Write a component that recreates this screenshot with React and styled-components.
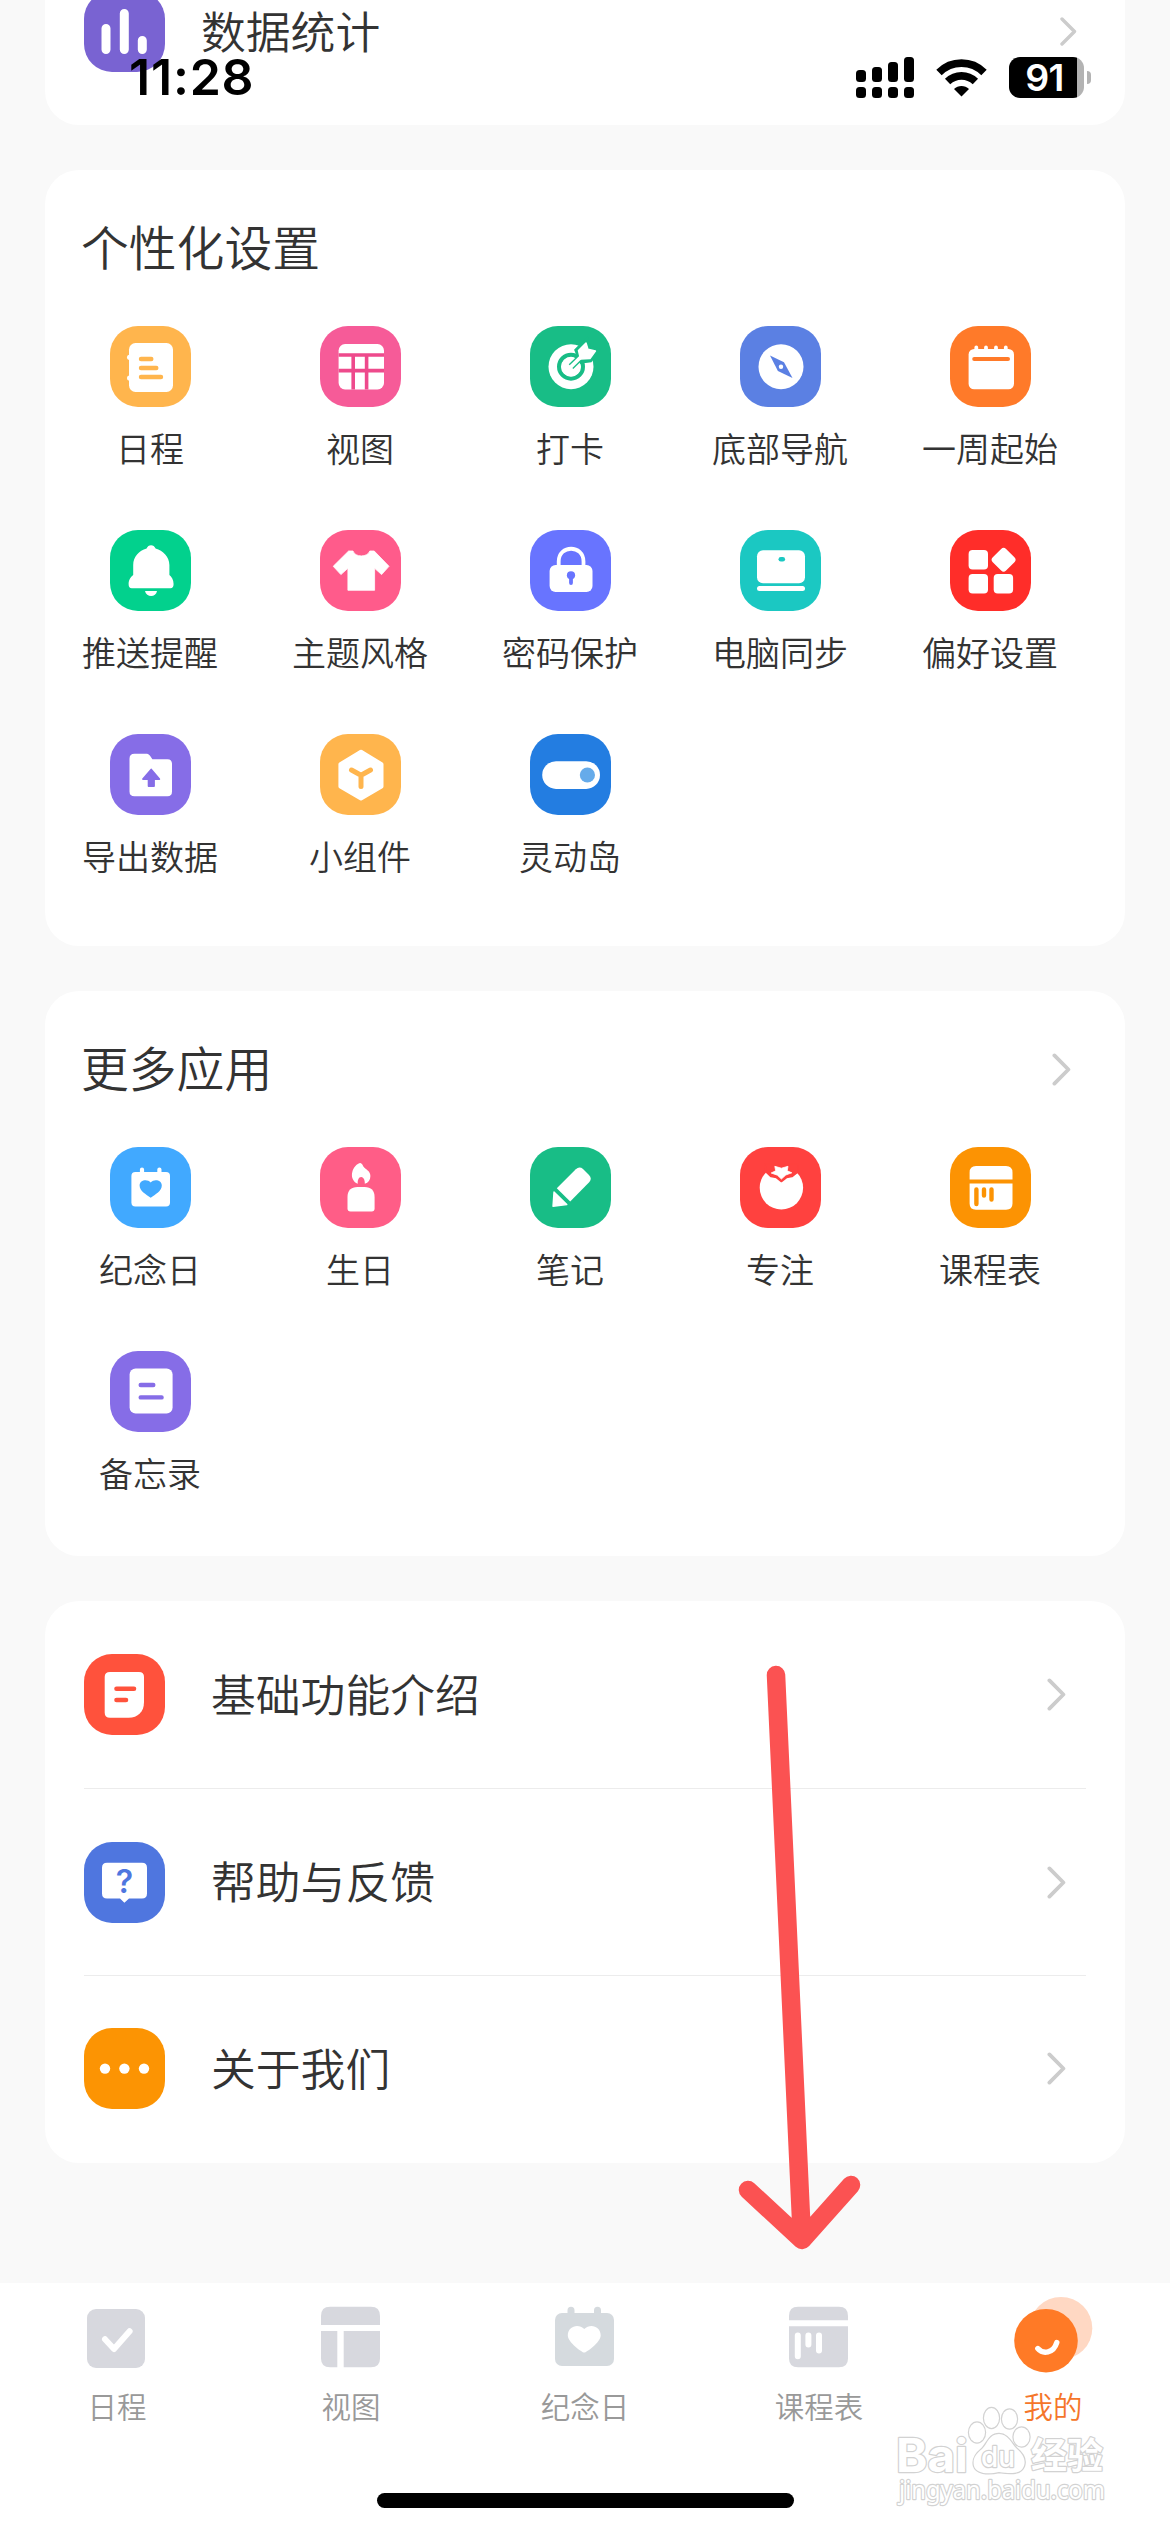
import styled, { createGlobalStyle } from "styled-components";

const GlobalStyle = createGlobalStyle`
  * {
    box-sizing: border-box;
  }
  body {
    margin: 0;
    background: #f9f9f9;
    font-family: "Noto Sans CJK SC", sans-serif;
    font-weight: 350;
    color: #333;
  }
`;

const Screen = styled.div`
  position: relative;
  display: flex;
  flex-direction: column;
  width: 1170px;
  height: 2532px;
  overflow: hidden;
  background: #f9f9f9;
`;

const StatusBar = styled.header`
  position: absolute;
  top: 57px;
  left: 0;
  width: 100%;
  height: 41px;
  padding: 0 79px 0 129px;
  display: flex;
  align-items: center;
  color: #000;
  font-family: Inter, sans-serif;
`;

const Time = styled.span`
  flex: 1;
  font-size: 50px;
  font-weight: 600;
  line-height: 41px;
  letter-spacing: 0.8px;
`;

const StatusIcons = styled.div`
  display: flex;
  align-items: center;
`;

const Wifi = styled.svg`
  margin: 0 22px;
`;

const Battery = styled.div`
  width: 75px;
  height: 41px;
  border-radius: 11px;
  display: flex;
  align-items: center;
  justify-content: center;
  padding-right: 4px;
  background: linear-gradient(to right, #000 68px, #b3b3b3 68px);
  color: #fff;
  font-size: 37.5px;
  font-weight: 600;
  letter-spacing: -0.6px;
`;

const BatteryTip = styled.div`
  width: 4px;
  height: 13px;
  margin-left: 3px;
  border-radius: 0 4px 4px 0;
  background: #b3b3b3;
`;

const Content = styled.main`
  flex: 1;
  display: flex;
  flex-direction: column;
  gap: 45px;
  padding: 0 45px;
  margin-top: -62px;
`;

const Card = styled.section`
  background: #fff;
  border-radius: 34px;
  padding-bottom: ${(props) => props.$bottom || 0}px;
`;

const CardHeader = styled.div`
  display: flex;
  align-items: center;
  justify-content: space-between;
  height: 156px;
  padding: 0 54px 0 36px;
`;

const CardTitle = styled.h2`
  margin: 0;
  padding-bottom: 4px;
  font-size: 47.8px;
  font-weight: 350;
  line-height: 60px;
`;

const AppGrid = styled.div`
  display: grid;
  grid-template-columns: repeat(5, 210px);
  grid-auto-rows: 204px;
`;

const AppItem = styled.div`
  display: flex;
  flex-direction: column;
  align-items: center;
`;

const AppLabel = styled.span`
  margin-top: 21px;
  font-size: 34px;
  line-height: 40px;
  white-space: nowrap;
`;

const Tile = styled.svg`
  width: 81px;
  height: 81px;
  flex: none;
  border-radius: 28px;
  background: ${(props) => props.$color};
  color: ${(props) => props.$color};
`;

const ListRow = styled.div`
  display: flex;
  align-items: center;
  height: 187px;
  margin: 0 39px;
  padding-right: ${(props) => props.$inset}px;
  gap: ${(props) => props.$gap}px;
  & + & {
    border-top: 1px solid #ececec;
  }
  &:last-child:not(:first-child) {
    height: 188px;
    padding-bottom: 2px;
  }
`;

const RowLabel = styled.span`
  flex: 1;
  padding-bottom: 4px;
  font-size: 44.8px;
  line-height: 60px;
`;

const Arrow = styled.svg`
  fill: none;
  stroke: #ccc;
  stroke-linecap: round;
  stroke-linejoin: round;
`;

const TabBar = styled.nav`
  display: grid;
  grid-template-columns: repeat(5, 1fr);
  height: 249px;
  padding-top: 14px;
  background: #fff;
`;

const Tab = styled.div`
  display: flex;
  flex-direction: column;
  align-items: center;
  color: ${(props) => (props.$active ? "#f5762a" : "#999")};
  font-size: 29.5px;
  line-height: 40px;
`;

const TabIcon = styled.svg`
  width: 80px;
  height: 80px;
  margin-bottom: 8px;
  overflow: visible;
`;

const HomeIndicator = styled.div`
  position: absolute;
  left: 377px;
  bottom: 24px;
  width: 417px;
  height: 15px;
  border-radius: 8px;
  background: #000;
`;

const Pointer = styled.svg`
  position: absolute;
  left: 736px;
  top: 1660px;
`;

const Watermark = styled.svg`
  position: absolute;
  left: 890px;
  top: 2400px;
`;

const bar = {
  fill: "none",
  stroke: "currentColor",
  strokeLinecap: "round",
  strokeLinejoin: "round",
};

const glyphs = {
  stats: (
    <path d="M22 37.5V58.5M40.3 22.5V58.5M58.3 49.5V58.5" {...bar} stroke="#fff" strokeWidth="9" />
  ),
  schedule: (
    <>
      <rect x="19" y="17" width="44" height="49" rx="6.5" />
      <circle cx="19.6" cy="31.3" r="2.6" />
      <circle cx="19.6" cy="52" r="2.6" />
      <path d="M31 33H41.3M31 42H46.3M31 51H51" {...bar} strokeWidth="4.4" />
    </>
  ),
  view: (
    <>
      <rect x="18.6" y="18" width="45.4" height="45.4" rx="6.5" />
      <path d="M18.6 29H64M18.6 44.6H64M33.2 30V63.4M46.6 30V63.4" fill="none" stroke="#ee4a8c" strokeWidth="3.6" />
    </>
  ),
  target: (
    <>
      <circle cx="41" cy="40.7" r="22.5" />
      <circle cx="41" cy="40.7" r="12" fill="none" stroke="currentColor" strokeWidth="4" />
      <path d="M41 40.7L55 27" {...bar} strokeWidth="9" />
      <path d="M48.2 24.5L56 16.8L57.9 23.2L65.4 25L59.5 33L52 34Z" fill="currentColor" stroke="currentColor" strokeWidth="7" />
      <circle cx="41" cy="40.7" r="9.6" />
      <path d="M41 40.7L53 29" stroke="currentColor" strokeWidth="6.5" />
      <path d="M40 41.7L55 27" stroke="#fff" strokeWidth="3.8" />
      <path d="M48.5 24.5L56 17L57.9 23.2L65.4 25L60 32.6L50.5 33Z" stroke="#fff" strokeWidth="1.5" strokeLinejoin="round" />
    </>
  ),
  compass: (
    <>
      <circle cx="41" cy="40.7" r="22.5" />
      <path d="M30 29.5L44 36.3L52.5 52L37.9 45Z" fill="currentColor" />
      <circle cx="41" cy="40.7" r="2.2" />
    </>
  ),
  calendar: (
    <>
      <rect x="18.6" y="23" width="45.4" height="40.3" rx="5.5" />
      <path d="M26.3 21.5V25M36 21.5V25M46 21.5V25M55.8 21.5V25" {...bar} stroke="#fff" strokeWidth="3.8" />
      <path d="M24.2 33H58" {...bar} strokeWidth="4" />
    </>
  ),
  bell: (
    <>
      <path d="M36.6 18.6C38 14 44 14 45.6 18.6C53 20.5 59.4 27 59.4 35V45C61.5 47 63.6 49.5 63.6 54C63.6 57 62.3 58.2 60.5 58.2H21.7C19.8 58.2 18.6 57 18.6 54C18.6 49.5 21 47 23.2 45V35C23.2 27 29 20.5 36.6 18.6Z" />
      <path d="M35 61H47C46 67.6 36.3 67.6 35 61Z" />
    </>
  ),
  shirt: (
    <path d="M28.6 21H33C35 27.6 47.6 27.6 49.8 21H54.2L69 36.3L61.6 44.6L54.6 38.3V60.3H27.9V38.3L20.9 44.6L13.2 36.3Z" stroke="#fff" strokeWidth="0.8" strokeLinejoin="round" />
  ),
  lock: (
    <>
      <rect x="19.6" y="35" width="42.9" height="27" rx="6" />
      <path d="M28.7 36V31.5C28.7 14.5 53.5 14.5 53.5 31.5V36" fill="none" stroke="#fff" strokeWidth="3.8" />
      <circle cx="41" cy="45.3" r="4.1" fill="currentColor" />
      <path d="M41 46V53" {...bar} strokeWidth="3.8" />
    </>
  ),
  laptop: (
    <>
      <rect x="17" y="20.3" width="48" height="33" rx="6" />
      <rect x="17" y="56" width="48" height="5" rx="2.5" />
      <rect x="38.5" y="27" width="6.6" height="4.6" rx="2.3" fill="currentColor" />
    </>
  ),
  prefs: (
    <>
      <rect x="18.6" y="20" width="19.4" height="19.6" rx="4" />
      <rect x="18.6" y="44" width="19.4" height="19.6" rx="4" />
      <rect x="43.7" y="44" width="19.4" height="19.6" rx="4" />
      <rect x="44.2" y="20.3" width="18.8" height="18.8" rx="3.5" transform="rotate(45 53.6 29.7)" />
    </>
  ),
  folder: (
    <>
      <path d="M24.5 19.7H35.5C38 19.7 39 20.3 40.2 22L42.4 25.2H57.5Q62 25.2 62 30V57.5Q62 62.3 57.5 62.3H24.5Q19.5 62.3 19.5 57.5V24.7Q19.5 19.7 24.5 19.7Z" />
      <path d="M41.2 35.5L49.3 45H44V52H38.6V45H33Z" fill="currentColor" stroke="currentColor" strokeWidth="1.8" strokeLinejoin="round" />
    </>
  ),
  widget: (
    <>
      <path d="M41 17.7L61.5 30.2V52.6L41 64.4L20.4 52.6V30.2Z" stroke="#fff" strokeWidth="4" strokeLinejoin="round" />
      <path d="M31.5 36L41 41.2L50.5 36M41 41.2V52.6" {...bar} strokeWidth="5" />
    </>
  ),
  island: (
    <>
      <rect x="12.2" y="27.3" width="57.8" height="27.6" rx="13.8" />
      <circle cx="57.4" cy="41" r="7.6" fill="#66abea" />
    </>
  ),
  heartDay: (
    <>
      <rect x="21.4" y="25" width="38.6" height="34.4" rx="4" />
      <path d="M32 22.5V27M49.4 22.5V27" {...bar} stroke="#fff" strokeWidth="4.2" />
      <path d="M40.7 50.7C36 47.6 29.6 44 29.6 38.6C29.6 33.2 37 31.6 40.7 35.4C44.4 31.6 51.8 33.2 51.8 38.6C51.8 44 45.4 47.6 40.7 50.7Z" fill="currentColor" />
    </>
  ),
  candle: (
    <>
      <path d="M27.5 50C27.5 43.5 31 40 37.5 40H44.6C51 40 54.6 43.5 54.6 50V61.6Q54.6 64.6 51.6 64.6H30.5Q27.5 64.6 27.5 61.6Z" />
      <path d="M37.8 36.8C33 35 31 30 32.3 25C33.4 20.4 37 16.5 40.4 16C42.6 16.5 42.6 19 44.2 20.4C47 23 50.4 24.5 50.4 29C50.4 33 48.4 35.7 44.8 36.8C45 34 44 30 41.2 30C38.6 30 37.4 33.5 37.8 36.8Z" />
    </>
  ),
  pencil: (
    <>
      <path d="M26.8 41.2L45.8 22.3Q49.3 19 53 22L59 28Q62.3 31.6 59.4 35L40.2 54.6Z" />
      <path d="M24 45L36.8 57.6L23 59.2Z" stroke="#fff" strokeWidth="1.4" strokeLinejoin="round" />
    </>
  ),
  tomato: (
    <>
      <circle cx="41.4" cy="40.8" r="21.7" />
      <path d="M25 17H58V25L52 29.6L46.5 30.6L41.4 34.6L36.4 30.6L31 29.6L26 25Z" {...bar} fill="currentColor" strokeWidth="1.5" />
      <path d="M34.8 19.3L41.4 21.2L48 19.3L47.2 23.8L51.8 25.8L45.8 28L41.4 32L37.4 28.2L31.2 26L35.7 23.8Z" stroke="#fff" strokeWidth="0.8" strokeLinejoin="round" />
    </>
  ),
  timetable: (
    <>
      <path d="M19.6 32.4V25.5Q19.6 19 26 19H56Q62.5 19 62.5 25.5V32.4ZM19.6 36.4H62.5V56.5Q62.5 62.7 56 62.7H26Q19.6 62.7 19.6 56.5Z" />
      <path d="M26.4 42.5V57M34 42.5V48.6M41.5 42.5V52.6" {...bar} strokeWidth="4.4" />
    </>
  ),
  memo: (
    <>
      <rect x="19.6" y="17.5" width="43" height="45" rx="6" />
      <path d="M30.7 34H43.3M30.7 46.4H51.6" {...bar} strokeWidth="4.4" />
    </>
  ),
  guide: (
    <>
      <path d="M26 18H55Q60 18 60 23V48C60 58 54 63.7 44.5 63.7H26Q20.7 63.7 20.7 58.7V23Q20.7 18 26 18Z" />
      <path d="M32.5 34.8H50M32.5 46H42" {...bar} strokeWidth="4.6" />
    </>
  ),
  help: (
    <>
      <path d="M23 20.7H58Q63 20.7 63 25.7V51.5Q63 56.5 58 56.5H45L40.4 60.8L36 56.5H23Q18 56.5 18 51.5V25.7Q18 20.7 23 20.7Z" />
      <text x="40.4" y="50.8" textAnchor="middle" fontFamily="Inter, sans-serif" fontWeight="600" fontSize="32" fill="currentColor">?</text>
    </>
  ),
  more: (
    <>
      <circle cx="21" cy="40.6" r="5.2" />
      <circle cx="40.4" cy="40.6" r="5.2" />
      <circle cx="60" cy="40.6" r="5.2" />
    </>
  ),
};

const tabGlyphs = {
  schedule: (
    <>
      <rect x="10" y="12" width="58" height="59" rx="9" fill="#d7d8de" />
      <path d="M28 42.3L37 52L52.6 34.3" {...bar} stroke="#fff" strokeWidth="6" />
    </>
  ),
  view: (
    <path fill="#d7d8de" d="M10 28V19Q10 9.7 19 9.7H60Q69 9.7 69 19V28ZM10 34H26.3V70.3H19Q10 70.3 10 61.5ZM32.7 34H69V61.5Q69 70.3 60 70.3H32.7Z" />
  ),
  heartDay: (
    <>
      <rect x="10" y="16" width="59" height="53" rx="7" fill="#d5dade" />
      <path d="M26 13.2V20M52.5 13.2V20" {...bar} stroke="#d5dade" strokeWidth="7" />
      <path d="M39.3 55.5C37 55.5 22.8 45 22.8 38.4C22.8 29 33.5 26 39.3 32C45 26 55.7 29 55.7 38.4C55.7 45 41.5 55.5 39.3 55.5Z" fill="#fff" />
    </>
  ),
  timetable: (
    <>
      <path fill="#d7d8de" d="M10 23.2V19Q10 9.7 19 9.7H60Q69 9.7 69 19V23.2ZM10 29.2H69V61.5Q69 70.3 60 70.3H19Q10 70.3 10 61.5Z" />
      <path d="M18.8 38.5V59.3M29.4 38.5V47.5M40 38.5V53.5" {...bar} stroke="#fff" strokeWidth="6" />
    </>
  ),
  mine: (
    <>
      <circle cx="48" cy="31.2" r="31.3" fill="#ffd8c3" />
      <circle cx="33" cy="43.7" r="31.8" fill="#ff7a26" />
      <path d="M24.8 51.5C30 57.5 40.5 56.5 43.8 45.5" {...bar} stroke="#fff" strokeWidth="5.4" />
    </>
  ),
};

const personalItems = [
  { icon: "schedule", label: "日程", color: "#ffb54d" },
  { icon: "view", label: "视图", color: "#f65b98" },
  { icon: "target", label: "打卡", color: "#18bd86" },
  { icon: "compass", label: "底部导航", color: "#5b80e3" },
  { icon: "calendar", label: "一周起始", color: "#ff7a29" },
  { icon: "bell", label: "推送提醒", color: "#02d18d" },
  { icon: "shirt", label: "主题风格", color: "#ff5b8b" },
  { icon: "lock", label: "密码保护", color: "#6874ff" },
  { icon: "laptop", label: "电脑同步", color: "#1bc8c2" },
  { icon: "prefs", label: "偏好设置", color: "#ff2d29" },
  { icon: "folder", label: "导出数据", color: "#866de7" },
  { icon: "widget", label: "小组件", color: "#ffb54d" },
  { icon: "island", label: "灵动岛", color: "#237de1" },
];

const moreItems = [
  { icon: "heartDay", label: "纪念日", color: "#41a9ff" },
  { icon: "candle", label: "生日", color: "#ff5d87" },
  { icon: "pencil", label: "笔记", color: "#18bd86" },
  { icon: "tomato", label: "专注", color: "#ff413f" },
  { icon: "timetable", label: "课程表", color: "#fc9303" },
  { icon: "memo", label: "备忘录", color: "#866de7" },
];

const listItems = [
  { icon: "guide", label: "基础功能介绍", color: "#ff523c" },
  { icon: "help", label: "帮助与反馈", color: "#4f76df" },
  { icon: "more", label: "关于我们", color: "#fc9403" },
];

const tabs = [
  { icon: "schedule", label: "日程" },
  { icon: "view", label: "视图" },
  { icon: "heartDay", label: "纪念日" },
  { icon: "timetable", label: "课程表" },
  { icon: "mine", label: "我的", active: true },
];

const TileIcon = ({ name, color }) => (
  <Tile viewBox="0 0 81 81" fill="#fff" $color={color}>
    {glyphs[name]}
  </Tile>
);

const Chevron = ({ small }) =>
  small ? (
    <Arrow width="17" height="29" viewBox="0 0 17 29" strokeWidth="3.4">
      <path d="M2 2L14.5 14.5L2 27" />
    </Arrow>
  ) : (
    <Arrow width="19" height="33" viewBox="0 0 19 33" strokeWidth="3.8">
      <path d="M2.4 2.4L16.4 16.5L2.4 30.6" />
    </Arrow>
  );

const AppSection = ({ title, items, bottom, hasMore }) => (
  <Card $bottom={bottom}>
    <CardHeader>
      <CardTitle>{title}</CardTitle>
      {hasMore && <Chevron />}
    </CardHeader>
    <AppGrid>
      {items.map((item) => (
        <AppItem key={item.label}>
          <TileIcon name={item.icon} color={item.color} />
          <AppLabel>{item.label}</AppLabel>
        </AppItem>
      ))}
    </AppGrid>
  </Card>
);

const App = () => {
  return (
    <>
      <GlobalStyle />
      <Screen>
        <Content>
          <Card>
            <ListRow $gap={36} $inset={9}>
              <TileIcon name="stats" color="#7963d2" />
              <RowLabel>数据统计</RowLabel>
              <Chevron small />
            </ListRow>
          </Card>
          <AppSection title="个性化设置" items={personalItems} bottom={8} />
          <AppSection title="更多应用" items={moreItems} bottom={1} hasMore />
          <Card>
            {listItems.map((item) => (
              <ListRow key={item.label} $gap={46} $inset={20}>
                <TileIcon name={item.icon} color={item.color} />
                <RowLabel>{item.label}</RowLabel>
                <Chevron />
              </ListRow>
            ))}
          </Card>
        </Content>

        <TabBar>
          {tabs.map((tab) => (
            <Tab key={tab.label} $active={tab.active}>
              <TabIcon viewBox="0 0 80 80">{tabGlyphs[tab.icon]}</TabIcon>
              {tab.label}
            </Tab>
          ))}
        </TabBar>

        <StatusBar>
          <Time>11:28</Time>
          <StatusIcons>
            <svg width="58" height="41" viewBox="0 0 58 41">
              <rect x="0" y="13" width="10" height="12" rx="3.5" />
              <rect x="16" y="10" width="10" height="15" rx="3.5" />
              <rect x="32" y="5" width="10" height="20" rx="3.5" />
              <rect x="48" y="0" width="10" height="25" rx="3.5" />
              <rect x="0" y="30" width="10" height="11" rx="3.5" />
              <rect x="16" y="30" width="10" height="11" rx="3.5" />
              <rect x="32" y="30" width="10" height="11" rx="3.5" />
              <rect x="48" y="30" width="10" height="11" rx="3.5" />
            </svg>
            <Wifi width="51" height="38" viewBox="0 0 51 38">
              <path d="M3 13.5C15.5 1 35.5 1 48 13.5" fill="none" stroke="#000" strokeWidth="7.6" />
              <path d="M11.6 22.6C19.5 15 31.5 15 39.4 22.6" fill="none" stroke="#000" strokeWidth="7.6" />
              <path d="M18 30C22 26 29 26 33 30L25.5 37.6Z" />
            </Wifi>
            <Battery>91</Battery>
            <BatteryTip />
          </StatusIcons>
        </StatusBar>

        <Pointer width="130" height="600" fill="none" stroke="#fb5252" strokeWidth="18.5" strokeLinecap="round" strokeLinejoin="round">
          <path d="M40 15L66 580M12 530L66 580L115 525" />
        </Pointer>

        <Watermark width="230" height="115" viewBox="0 0 230 115" fill="#fff" stroke="#d2d2d2" strokeWidth="2.4" paintOrder="stroke" strokeLinejoin="round">
          <text x="6" y="72" fontFamily="Inter, sans-serif" fontWeight="700" fontSize="46" textLength="72" lengthAdjust="spacingAndGlyphs">Bai</text>
          <ellipse cx="87" cy="32.500" rx="8" ry="10" />
          <ellipse cx="101.500" cy="18" rx="7.500" ry="10" />
          <ellipse cx="119.500" cy="19" rx="7.500" ry="9.500" />
          <ellipse cx="131.500" cy="37" rx="8" ry="9.500" />
          <path d="M109 34C118 34 121 43 127 49C133 54 136 60 134 66C131 74 122 74 109 72C97 75 86 73 84 66C82 58 87 53 92 49C98 43 99 34 109 34Z" />
          <text x="91" y="67" fontFamily="Inter, sans-serif" fontWeight="500" fontSize="28" textLength="34" lengthAdjust="spacingAndGlyphs">du</text>
          <text x="141" y="69" fontFamily="Noto Sans CJK SC, sans-serif" fontWeight="700" fontSize="36">经验</text>
          <text x="9" y="99" fontFamily="Noto Sans, sans-serif" fontWeight="400" fontSize="25" textLength="206" lengthAdjust="spacingAndGlyphs">jingyan.baidu.com</text>
        </Watermark>

        <HomeIndicator />
      </Screen>
    </>
  );
};

export default App;
